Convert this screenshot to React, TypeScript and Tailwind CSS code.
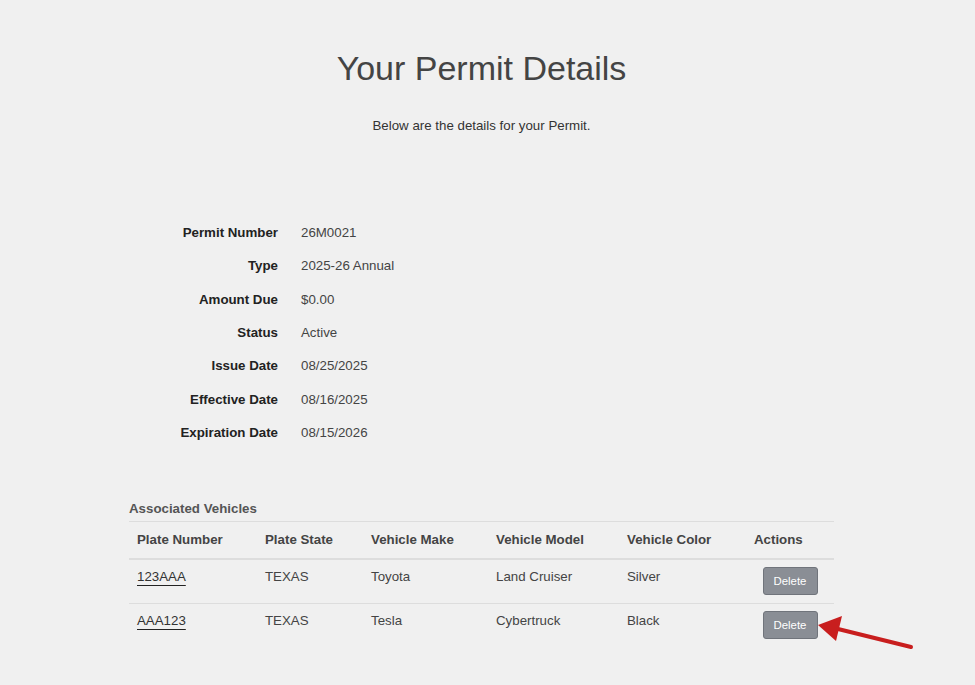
import React from "react";

const details: [string, string][] = [
  ["Permit Number", "26M0021"],
  ["Type", "2025-26 Annual"],
  ["Amount Due", "$0.00"],
  ["Status", "Active"],
  ["Issue Date", "08/25/2025"],
  ["Effective Date", "08/16/2025"],
  ["Expiration Date", "08/15/2026"],
];

const vehicles = [
  { plate: "123AAA", state: "TEXAS", make: "Toyota", model: "Land Cruiser", color: "Silver" },
  { plate: "AAA123", state: "TEXAS", make: "Tesla", model: "Cybertruck", color: "Black" },
];

const App = () => {
  return (
    <div
      className="relative min-h-screen w-full bg-[#f0f0f0] text-[#333]"
      style={{ fontFamily: '"Liberation Sans", Arial, sans-serif' }}
    >
      <div className="w-[963px] pt-[48px]">
        <div className="mx-auto w-[705px]">
          {/* HEADER */}
          <h1 className="text-center text-[34px] leading-[40px] font-normal text-[#444]">
            Your Permit Details
          </h1>
          <p className="mt-[28px] text-center text-[13.3px] leading-[20px] text-[#333]">
            Below are the details for your Permit.
          </p>

          {/* DETAILS */}
          <div className="mt-[80px] grid grid-cols-[149px_1fr] gap-x-[23px]">
            {details.map(([label, value]) => (
              <React.Fragment key={label}>
                <div className="text-right text-[13.3px] leading-[33.33px] font-bold text-[#222]">
                  {label}
                </div>
                <div className="text-[13.3px] leading-[33.33px] text-[#444]">{value}</div>
              </React.Fragment>
            ))}
          </div>

          {/* VEHICLES */}
          <h2 className="mt-[50px] mb-[2px] text-[13.3px] leading-[20px] font-bold text-[#555]">
            Associated Vehicles
          </h2>
          <table className="w-full table-fixed border-collapse text-[13.3px] leading-[20px]">
            <colgroup>
              <col className="w-[128px]" />
              <col className="w-[106px]" />
              <col className="w-[125px]" />
              <col className="w-[131px]" />
              <col className="w-[127px]" />
              <col className="w-[88px]" />
            </colgroup>
            <thead>
              <tr className="border-t border-[#ddd] border-b-2 text-left text-[#444]">
                <th className="p-2 font-bold">Plate Number</th>
                <th className="p-2 font-bold">Plate State</th>
                <th className="p-2 font-bold">Vehicle Make</th>
                <th className="p-2 font-bold">Vehicle Model</th>
                <th className="p-2 font-bold">Vehicle Color</th>
                <th className="p-2 font-bold">Actions</th>
              </tr>
            </thead>
            <tbody>
              {vehicles.map((v, i) => (
                <tr key={v.plate} className={i === 0 ? "border-b border-[#ddd] align-top" : "align-top"}>
                  <td className="px-2 pt-[7px] pb-2">
                    <a
                      href="#"
                      className="text-[#333] underline decoration-[#222] underline-offset-[4px]"
                    >
                      {v.plate}
                    </a>
                  </td>
                  <td className="px-2 pt-[7px] pb-2 text-[#444]">{v.state}</td>
                  <td className="px-2 pt-[7px] pb-2 text-[#444]">{v.make}</td>
                  <td className="px-2 pt-[7px] pb-2 text-[#444]">{v.model}</td>
                  <td className="px-2 pt-[7px] pb-2 text-[#444]">{v.color}</td>
                  <td className="px-2 pt-[7px] pb-2 text-center">
                    <button className="h-[28px] w-[55px] rounded-[3px] border border-[#70747b] bg-[#8a8e95] text-[11.4px] text-white">
                      Delete
                    </button>
                  </td>
                </tr>
              ))}
            </tbody>
          </table>
        </div>
      </div>

      {/* RED ARROW */}
      <svg
        className="pointer-events-none absolute left-0 top-0"
        width="975"
        height="685"
        viewBox="0 0 975 685"
      >
        <line x1="911" y1="647" x2="834" y2="628" stroke="#c81e1e" strokeWidth="4" strokeLinecap="round" />
        <polygon points="818,625 842,616 836,641" fill="#c81e1e" />
      </svg>
    </div>
  );
};

export default App;
